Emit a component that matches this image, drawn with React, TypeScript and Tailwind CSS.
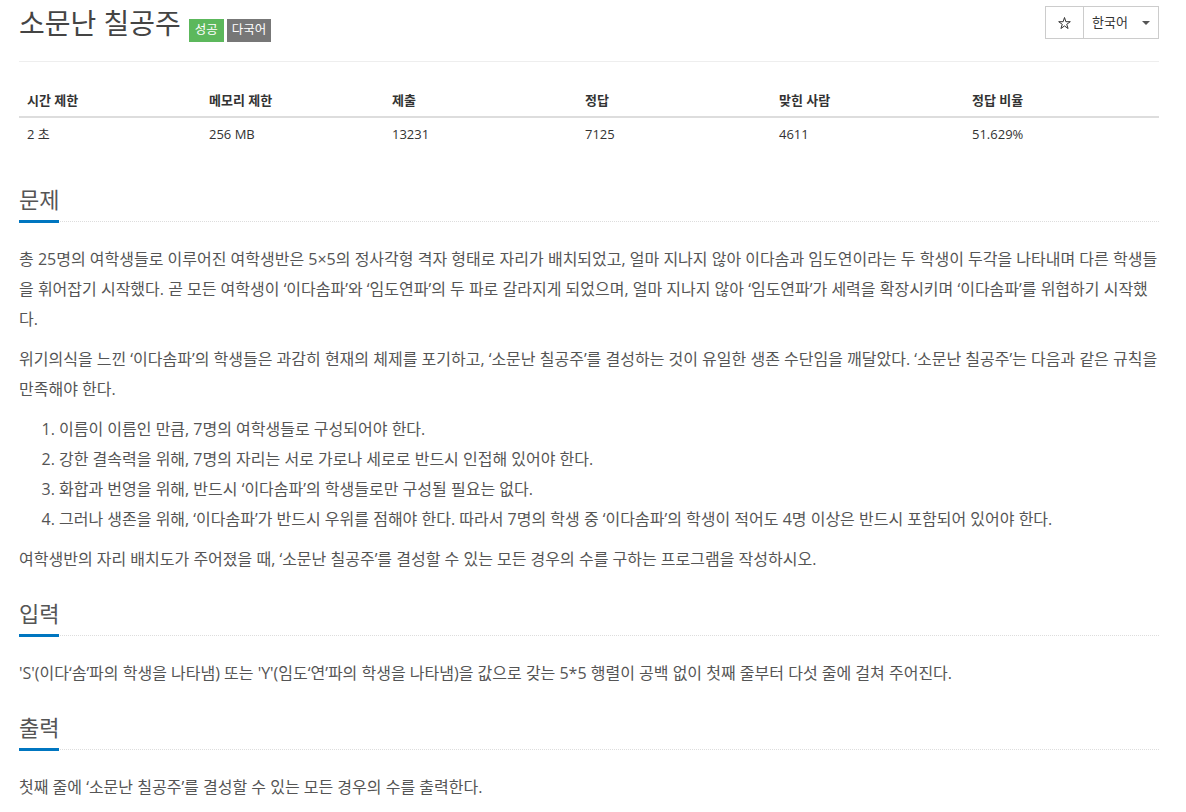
import React from 'react';

const stats = [
    { label: '시간 제한', value: '2 초', w: 'w-[182px]' },
    { label: '메모리 제한', value: '256 MB', w: 'w-[183px]' },
    { label: '제출', value: '13231', w: 'w-[193px]' },
    { label: '정답', value: '7125', w: 'w-[194px]' },
    { label: '맞힌 사람', value: '4611', w: 'w-[193px]' },
    { label: '정답 비율', value: '51.629%', w: 'w-[195px]' },
];

const rules = [
    '이름이 이름인 만큼, 7명의 여학생들로 구성되어야 한다.',
    '강한 결속력을 위해, 7명의 자리는 서로 가로나 세로로 반드시 인접해 있어야 한다.',
    '화합과 번영을 위해, 반드시 ‘이다솜파’의 학생들로만 구성될 필요는 없다.',
    '그러나 생존을 위해, ‘이다솜파’가 반드시 우위를 점해야 한다. 따라서 7명의 학생 중 ‘이다솜파’의 학생이 적어도 4명 이상은 반드시 포함되어 있어야 한다.',
];

const Headline = ({ title }: { title: string }) => (
    <div className="flex border-b border-dotted border-[#ddd]">
        <h2 className="-mb-[2px] border-b-[3px] border-[#0076c0] pb-[9px] text-[22px] leading-[24px] text-[#555]">
            {title}
        </h2>
    </div>
);

const StarIcon = () => (
    <svg width="13" height="12" viewBox="0 0 13 12" fill="none">
        <polygon
            points="6.5,0.5 7.87,4.72 12.3,4.7 8.72,7.32 10.09,11.53 6.5,8.93 2.91,11.53 4.28,7.32 0.7,4.7 5.13,4.72"
            stroke="#333"
            strokeWidth="1"
            strokeLinejoin="round"
        />
    </svg>
);

export default function App() {
    return (
        <div className="min-h-screen bg-white font-['Open_Sans','Noto_Sans_CJK_KR',sans-serif] text-[#555]">
            <div className="ml-[19px] w-[1140px]">
                {/* --- PAGE HEADER --- */}
                <div className="flex items-start justify-between border-b border-[#eee] pt-[5px] pb-[19px]">
                    <h1 className="flex items-baseline text-[28px] leading-[36px] text-[#444]">
                        <span>소문난 칠공주</span>
                        <span className="ml-[8px] bg-[#5cb85c] px-[6px] pt-[3px] pb-[4px] text-[12.5px] leading-[16px] text-white">
                            성공
                        </span>
                        <span className="ml-[3px] bg-[#777] px-[5px] pt-[3px] pb-[4px] text-[12.5px] leading-[16px] text-white">
                            다국어
                        </span>
                    </h1>
                    <div className="mt-px flex h-[33px] border border-[#ccc] bg-white text-[13px] text-[#333]">
                        <button className="flex w-[38px] items-center justify-center border-r border-[#ccc]">
                            <StarIcon />
                        </button>
                        <button className="flex items-center gap-[14px] px-[8px]">
                            <span>한국어</span>
                            <span className="h-0 w-0 border-x-4 border-t-4 border-x-transparent border-t-[#555]"></span>
                        </button>
                    </div>
                </div>

                {/* --- STATS TABLE --- */}
                <table className="mt-[22px] w-full table-fixed text-[13px] text-[#333]">
                    <thead>
                        <tr className="border-b-2 border-[#ddd]">
                            {stats.map((s) => (
                                <th key={s.label} className={`${s.w} px-2 py-[7px] text-left font-bold leading-[18px]`}>
                                    {s.label}
                                </th>
                            ))}
                        </tr>
                    </thead>
                    <tbody>
                        <tr>
                            {stats.map((s) => (
                                <td key={s.label} className="px-2 py-[7px] leading-[18px]">
                                    {s.value}
                                </td>
                            ))}
                        </tr>
                    </tbody>
                </table>

                {/* --- 문제 --- */}
                <section className="mt-[37px]">
                    <Headline title="문제" />
                    <div className="mt-[22px] text-[16px] leading-[30px]">
                        <p className="mb-[10px]">
                            총 25명의 여학생들로 이루어진 여학생반은 5×5의 정사각형 격자 형태로 자리가 배치되었고, 얼마 지나지 않아 이다솜과 임도연이라는 두 학생이 두각을 나타내며 다른 학생들을 휘어잡기 시작했다. 곧 모든 여학생이 ‘이다솜파’와 ‘임도연파’의 두 파로 갈라지게 되었으며, 얼마 지나지 않아 ‘임도연파’가 세력을 확장시키며 ‘이다솜파’를 위협하기 시작했다.
                        </p>
                        <p className="mb-[10px]">
                            위기의식을 느낀 ‘이다솜파’의 학생들은 과감히 현재의 체제를 포기하고, ‘소문난 칠공주’를 결성하는 것이 유일한 생존 수단임을 깨달았다. ‘소문난 칠공주’는 다음과 같은 규칙을 만족해야 한다.
                        </p>
                        <ol className="mb-[10px] list-decimal pl-10">
                            {rules.map((r) => (
                                <li key={r}>{r}</li>
                            ))}
                        </ol>
                        <p>
                            여학생반의 자리 배치도가 주어졌을 때, ‘소문난 칠공주’를 결성할 수 있는 모든 경우의 수를 구하는 프로그램을 작성하시오.
                        </p>
                    </div>
                </section>

                {/* --- 입력 --- */}
                <section className="mt-[27px]">
                    <Headline title="입력" />
                    <p className="mt-[22px] text-[16px] leading-[30px]">
                        'S'(이다‘솜’파의 학생을 나타냄) 또는 'Y'(임도‘연’파의 학생을 나타냄)을 값으로 갖는 5*5 행렬이 공백 없이 첫째 줄부터 다섯 줄에 걸쳐 주어진다.
                    </p>
                </section>

                {/* --- 출력 --- */}
                <section className="mt-[27px]">
                    <Headline title="출력" />
                    <p className="mt-[22px] text-[16px] leading-[30px]">
                        첫째 줄에 ‘소문난 칠공주’를 결성할 수 있는 모든 경우의 수를 출력한다.
                    </p>
                </section>
            </div>
        </div>
    );
}
